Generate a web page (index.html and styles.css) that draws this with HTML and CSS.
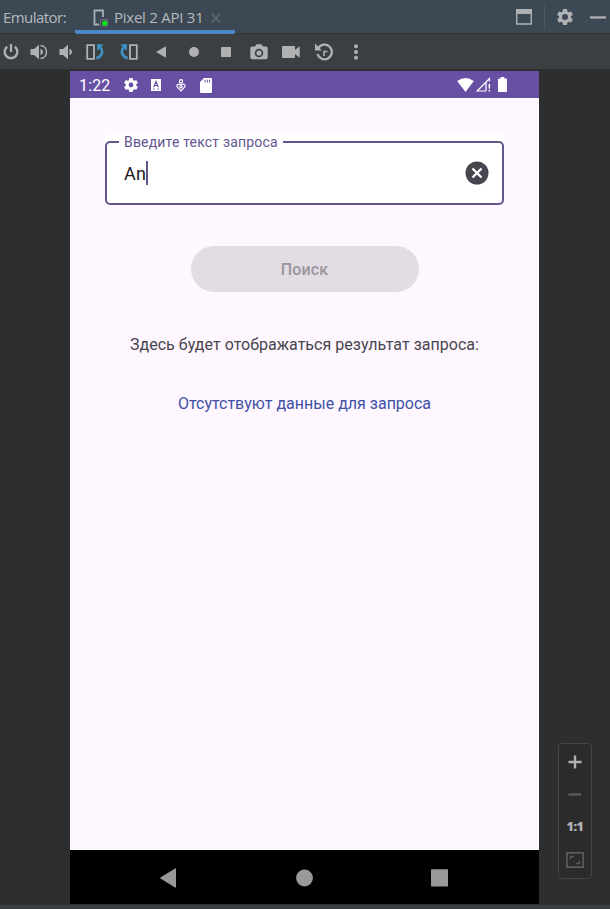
FILE: index.html
```html
<!DOCTYPE html>
<html lang="ru">
<head>
<meta charset="utf-8">
<title>Emulator</title>
<link rel="stylesheet" href="styles.css">
</head>
<body>
<div class="window">
  <header class="titlebar">
    <span class="title">Emulator:</span>
    <div class="tab">
      <svg class="tab-icon" width="18" height="18" viewBox="0 0 18 18"><path d="M7 15.500H2.500V1.500H11V8" fill="none" stroke="#a4b0ba" stroke-width="1.800"/><path d="M8.500 10.500H15.500V17H8.500Z" fill="#3c4451" stroke="#75608f"/><circle cx="12.800" cy="14.200" r="2.700" fill="#08e314"/></svg>
      <span class="tab-name">Pixel 2 API 31</span>
      <svg class="close" width="10" height="10" viewBox="0 0 10 10"><path d="M.5.5 9 9.500M9 .5.5 9.500" stroke="#5f6b75" stroke-width="1.300"/></svg>
    </div>
    <div class="window-actions">
      <svg width="16" height="16" viewBox="0 0 16 16"><path d="M.7 1H15.300V15H.7Z" fill="none" stroke="#adb1b4" stroke-width="1.400"/><path d="M0 0H16V5H0Z" fill="#adb1b4"/></svg>
      <i class="separator"></i>
      <svg width="20" height="20" viewBox="0 0 24 24" fill="#afb1b3"><path d="M19.140 12.940c.04-.3.06-.61.06-.94 0-.32-.02-.64-.07-.94l2.030-1.580a.49.49 0 0 0 .12-.61l-1.920-3.320a.49.49 0 0 0-.59-.22l-2.390.96a7 7 0 0 0-1.620-.94l-.36-2.540A.48.48 0 0 0 13.920 2.400h-3.840a.48.48 0 0 0-.48.41l-.36 2.540c-.59.24-1.130.57-1.620.94l-2.390-.96a.48.48 0 0 0-.59.22L2.720 8.870a.47.47 0 0 0 .12.61l2.030 1.580a7 7 0 0 0 0 1.880l-2.030 1.580a.49.49 0 0 0-.12.61l1.920 3.320c.12.22.37.29.59.22l2.390-.96c.5.38 1.030.7 1.620.94l.36 2.540c.05.24.24.41.48.41h3.840c.24 0 .44-.17.47-.41l.36-2.540c.59-.24 1.130-.56 1.620-.94l2.390.96c.22.08.47 0 .59-.22l1.920-3.320a.47.47 0 0 0-.12-.61ZM12 15.600a3.600 3.600 0 1 1 0-7.200 3.600 3.600 0 0 1 0 7.200Z"/></svg>
      <svg width="16" height="3" viewBox="0 0 16 3"><path d="M0 .3H16V2.600H0Z" fill="#adb1b4"/></svg>
    </div>
  </header>

  <nav class="toolbar">
    <svg width="18" height="18" viewBox="0 0 18 18"><path d="M5.200 3.700a6.400 6.400 0 1 0 7.600 0M9 1V9" fill="none" stroke="#afb1b3" stroke-width="2.300"/></svg>
    <svg width="18" height="16" viewBox="0 0 18 16"><path d="M.5 5H4L9 .7V15.300L4 11H.5Z" fill="#afb1b3"/><path d="M10.500 1.500C18.500 2.500 18.500 13.500 10.500 14.500" fill="none" stroke="#afb1b3" stroke-width="1.500"/><path d="M10.500 4.800C13.800 6 13.800 10 10.500 11.200Z" fill="#afb1b3"/></svg>
    <svg width="14" height="16" viewBox="0 0 14 16"><path d="M.5 5H4L9 .7V15.300L4 11H.5Z" fill="#afb1b3"/><path d="M10.500 4.800C13.800 6 13.800 10 10.500 11.200Z" fill="#afb1b3"/></svg>
    <svg width="18" height="18" viewBox="0 0 18 18"><path d="M1.200 2.200H8V15.800H1.200Z" fill="none" stroke="#afb1b3" stroke-width="1.800"/><path d="M10.500 15.500C17 12.500 17.200 8 14.500 4.500" fill="none" stroke="#3e94c4" stroke-width="2.600"/><path d="M11 1.200H17.700L11.500 8Z" fill="#3e94c4"/></svg>
    <svg width="18" height="18" viewBox="0 0 18 18"><g transform="translate(18 0) scale(-1 1)"><path d="M1.200 2.200H8V15.800H1.200Z" fill="none" stroke="#afb1b3" stroke-width="1.800"/><path d="M10.500 15.500C17 12.500 17.200 8 14.500 4.500" fill="none" stroke="#3e94c4" stroke-width="2.600"/><path d="M11 1.200H17.700L11.500 8Z" fill="#3e94c4"/></g></svg>
    <svg width="10" height="12" viewBox="0 0 10 12"><path d="M10 .3V11.700L0 6Z" fill="#afb1b3"/></svg>
    <svg width="10" height="10" viewBox="0 0 10 10"><circle cx="5" cy="5" r="5" fill="#afb1b3"/></svg>
    <svg width="10" height="10" viewBox="0 0 10 10"><rect width="10" height="10" rx=".5" fill="#afb1b3"/></svg>
    <svg width="18" height="16" viewBox="0 0 18 16"><path d="M2 2.500H5L6.500.3H11.500L13 2.500H16Q17.700 2.500 17.700 4.300V13.500Q17.700 15.300 16 15.300H2Q.3 15.300.3 13.500V4.300Q.3 2.500 2 2.500Z" fill="#afb1b3"/><circle cx="9" cy="9" r="3.400" fill="#afb1b3" stroke="#3c3f41" stroke-width="1.700"/></svg>
    <svg width="18" height="12" viewBox="0 0 18 12"><path d="M1 0H12Q13 0 13 1V4L17.700.3V11.700L13 8V11Q13 12 12 12H1Q0 12 0 11V1Q0 0 1 0Z" fill="#afb1b3"/></svg>
    <svg width="20" height="18" viewBox="0 0 20 18"><path d="M4.200 5.300A7.300 7.300 0 1 1 3.500 11" fill="none" stroke="#afb1b3" stroke-width="2.300"/><path d="M1 .5V7.500H8Z" fill="#afb1b3"/><path d="M10 13V8.500H13.500" fill="none" stroke="#afb1b3" stroke-width="1.700"/></svg>
    <svg width="4" height="16" viewBox="0 0 4 16" fill="#afb1b3"><circle cx="2" cy="2.200" r="2"/><circle cx="2" cy="8" r="2"/><circle cx="2" cy="13.800" r="2"/></svg>
  </nav>

  <main class="stage">
    <section class="device">
      <div class="statusbar">
        <span class="clock">1:22</span>
        <div class="notices">
          <svg width="16" height="16" viewBox="1 1 22 22" fill="#fff"><path d="M19.140 12.940c.04-.3.06-.61.06-.94 0-.32-.02-.64-.07-.94l2.030-1.580a.49.49 0 0 0 .12-.61l-1.920-3.320a.49.49 0 0 0-.59-.22l-2.390.96a7 7 0 0 0-1.620-.94l-.36-2.540A.48.48 0 0 0 13.920 2.400h-3.840a.48.48 0 0 0-.48.41l-.36 2.540c-.59.24-1.130.57-1.620.94l-2.390-.96a.48.48 0 0 0-.59.22L2.720 8.870a.47.47 0 0 0 .12.61l2.030 1.580a7 7 0 0 0 0 1.880l-2.030 1.580a.49.49 0 0 0-.12.61l1.920 3.320c.12.22.37.29.59.22l2.390-.96c.5.38 1.030.7 1.620.94l.36 2.540c.05.24.24.41.48.41h3.840c.24 0 .44-.17.47-.41l.36-2.540c.59-.24 1.130-.56 1.620-.94l2.390.96c.22.08.47 0 .59-.22l1.920-3.320a.47.47 0 0 0-.12-.61ZM12 15.300a3.300 3.300 0 1 1 0-6.600 3.300 3.300 0 0 1 0 6.600Z"/></svg>
          <svg width="10" height="12" viewBox="0 0 10 12"><path d="M0 0H10V12H0Z" fill="#fff"/><path d="M2.700 8.200 5 2.500 7.300 8.200M3.500 6.500H6.500M2 10H3.500M6.500 10H8" fill="none" stroke="#6750a4" stroke-width="1.200"/></svg>
          <svg width="10" height="13" viewBox="0 0 10 13" fill="none" stroke="#fff" stroke-width="1.200"><circle cx="5" cy="2.200" r="1.600"/><path d="M5 11.800 1.400 8.200C-.4 6 2.800 3.900 5 6.500 7.200 3.900 10.400 6 8.600 8.200ZM3.200 7.300 5 9 6.800 7.300"/></svg>
          <svg width="12" height="15" viewBox="0 0 12 15"><path d="M4 0H10.700Q12 0 12 1.300V13.700Q12 15 10.700 15H1.300Q0 15 0 13.700V4Z" fill="#fff"/><path d="M5 1.700V4.500M7.300 1.700V4.500M9.600 1.700V4.500" stroke="#6750a4" stroke-width="1"/></svg>
        </div>
        <div class="signals">
          <svg width="17" height="14" viewBox="0 0 17 14"><path d="M.2 3Q8.500-3 16.800 3L8.500 14Z" fill="#fff"/></svg>
          <svg width="15" height="15" viewBox="0 0 15 15" fill="none" stroke="#fff" stroke-width="1.200"><path d="M10 14H1.200L13.500 1.500V4.500M10 5.300V14"/><path d="M13.300 7V11.500M13.300 12.800V14.600" stroke-width="1.500"/></svg>
          <svg width="9" height="15" viewBox="0 0 9 15"><path d="M2.700 0H6.300V1.500H8Q9 1.500 9 2.500V14Q9 15 8 15H1Q0 15 0 14V2.500Q0 1.500 1 1.500H2.700Z" fill="#fff"/></svg>
        </div>
      </div>

      <div class="app">
        <div class="field-area">
          <fieldset class="field">
            <legend>Введите текст запроса</legend>
            <div class="field-row">
              <span class="value">An</span><i class="caret"></i>
              <svg class="clear" width="24" height="24" viewBox="0 0 24 24"><circle cx="12" cy="12" r="11.500" fill="#49454f"/><path d="M7.500 7.500 16.500 16.500M16.500 7.500 7.500 16.500" stroke="#fff" stroke-width="2.300"/></svg>
            </div>
          </fieldset>
        </div>
        <button class="search" disabled>Поиск</button>
        <p class="caption">Здесь будет отображаться результат запроса:</p>
        <p class="result">Отсутствуют данные для запроса</p>
      </div>

      <div class="navbar">
        <svg width="17" height="20" viewBox="0 0 17 20"><path d="M15.500.7V19.300L.5 10Z" fill="#999" stroke="#999" stroke-linejoin="round"/></svg>
        <svg width="17" height="18" viewBox="0 0 17 18"><circle cx="8.500" cy="9" r="8.400" fill="#999"/></svg>
        <svg width="17" height="18" viewBox="0 0 17 18"><rect y=".3" width="17" height="17.200" rx=".8" fill="#999"/></svg>
      </div>
    </section>

    <aside class="zoom">
      <svg width="14" height="14" viewBox="0 0 14 14"><path d="M7 .5V13.500M.5 7H13.500" stroke="#afb1b3" stroke-width="2.400"/></svg>
      <svg width="14" height="3" viewBox="0 0 14 3"><path d="M.5 1.500H13" stroke="#5b5d5e" stroke-width="2.200"/></svg>
      <span class="ratio">1:1</span>
      <svg width="18" height="16" viewBox="0 0 18 16" fill="none" stroke="#5b5d5e"><path d="M.9.9H17.100V15.100H.9Z" stroke-width="1.600"/><path d="M4.500 7.500V4.500H8M10 11.500H13.500V8.500" stroke-width="1.300"/></svg>
    </aside>
  </main>
  <footer class="bottombar"></footer>
</div>
</body>
</html>
```
FILE: styles.css
```css
* { box-sizing: border-box; }
body { margin: 0; background: #2d2e30; font-family: Roboto, sans-serif; }
svg { display: block; flex: none; }
.window { width: 610px; height: 909px; display: flex; flex-direction: column; overflow: hidden; }

.titlebar { height: 34px; flex: none; display: flex; background: #3d4855; border-bottom: 1px solid #323437; color: #b4b9bd; font: 15px/34px "Open Sans", sans-serif; }
.title { width: 75px; padding-left: 3px; letter-spacing: -.55px; white-space: nowrap; }
.tab { width: 160px; height: 34px; display: flex; align-items: center; padding-left: 17px; border-bottom: 4px solid #4a88c7; border-radius: 0 0 2px 2px; line-height: 30px; }
.tab-icon { margin-top: 5px; }
.tab-name { width: 91px; margin: 4px 0 0 4px; letter-spacing: -.25px; white-space: nowrap; }
.close { margin: 6px 0 0 6px; }
.window-actions { flex: 1; height: 34px; display: flex; align-items: center; justify-content: flex-end; padding-right: 4px; }
.separator { width: 1px; height: 24px; margin: 0 10px 0 12px; background: #4d555d; }
.window-actions svg:last-child { margin-left: 15px; }

.toolbar { height: 35px; flex: none; display: grid; grid-template-columns: 22px 34px 20px 38px 30px 34px 32px 32px 34px 30px 36px 28px; place-items: center; background: #3c3f41; }

.stage { flex: 1; display: flex; align-items: flex-start; padding: 2px 18px 0 70px; background: #2d2e30; }
.device { width: 469px; height: 833px; display: flex; flex-direction: column; }
.statusbar { height: 27px; display: flex; align-items: center; padding: 0 32px 0 9px; background: #6750a4; color: #fff; }
.clock { width: 44px; font-size: 16px; letter-spacing: .15px; padding-top: 2px; }
.notices { display: flex; align-items: center; gap: 13px; padding-top: 1px; }
.notices svg:nth-child(2) { margin-right: 2px; margin-left: -1px; }
.notices svg:nth-child(3) { margin-right: 1px; }
.signals { display: flex; align-items: center; gap: 3px; margin-left: auto; }
.signals svg:first-child { margin-right: -1px; }
.signals svg:last-child { margin-left: 4px; }

.app { height: 752px; display: flex; flex-direction: column; align-items: center; padding-top: 37px; background: #fef7ff; }
.field-area { width: 399px; height: 70px; background: linear-gradient(#fff 0 60px, transparent 60px); }
.field { height: 70px; margin: 0; padding: 0 13px 0 12px; border: 2px solid #65558f; border-radius: 5px; background: #fff; }
.field legend { height: 14px; padding: 0 5px; color: #65558f; font-size: 14px; line-height: 15px; letter-spacing: .18px; white-space: nowrap; }
.field-row { height: 48px; display: flex; align-items: center; }
.field-row { padding-left: 5px; }
.value { font-size: 18px; color: #1d1b20; letter-spacing: .2px; }
.caret { width: 2px; height: 24px; background: #65558f; }
.clear { margin-left: auto; }
.search { width: 228px; height: 46px; margin-top: 41px; padding: 1px 0 0; border: 0; border-radius: 23px; background: #e2dce4; color: #9a959d; font: 500 16px/45px Roboto, sans-serif; letter-spacing: .1px; }
.caption, .result { margin: 0; font-size: 16px; line-height: 20px; white-space: nowrap; }
.caption { margin-top: 43px; color: #49454f; letter-spacing: .03px; }
.result { margin-top: 39px; color: #3f51a5; }

.navbar { height: 54px; display: flex; align-items: center; justify-content: space-between; padding: 2px 91px 0 90px; background: #000; }

.zoom { width: 34px; height: 136px; margin: 672px 0 0 19px; display: grid; grid-template-rows: 36px 28px 38px 27px; place-items: center; flex: none; border: 1px solid #424446; border-radius: 4px; background: #2b2b2b; }
.ratio { color: #afb1b3; font: 800 12.500px/14px "Open Sans", sans-serif; letter-spacing: -.5px; }
.bottombar { height: 4px; flex: none; background: #3c3f41; }
```
